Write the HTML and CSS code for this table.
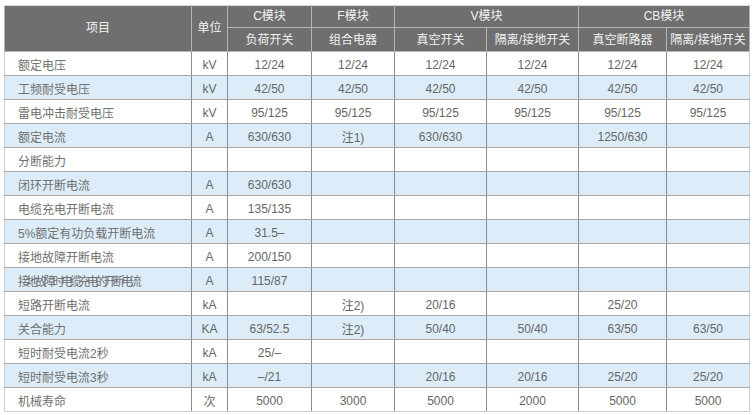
FILE: index.html
```html
<!DOCTYPE html>
<html lang="zh-CN">
<head>
<meta charset="utf-8">
<title>技术参数</title>
<link rel="stylesheet" href="styles.css">
</head>
<body>
<table class="spec">
  <colgroup>
    <col class="c-item">
    <col class="c-unit">
    <col class="c-c">
    <col class="c-f">
    <col class="c-v1">
    <col class="c-v2">
    <col class="c-cb1">
    <col class="c-cb2">
  </colgroup>
  <thead>
    <tr class="h1">
      <th rowspan="2">项目</th>
      <th rowspan="2">单位</th>
      <th>C模块</th>
      <th>F模块</th>
      <th colspan="2">V模块</th>
      <th colspan="2">CB模块</th>
    </tr>
    <tr class="h2">
      <th>负荷开关</th>
      <th>组合电器</th>
      <th>真空开关</th>
      <th>隔离/接地开关</th>
      <th>真空断路器</th>
      <th>隔离/接地开关</th>
    </tr>
  </thead>
  <tbody>
    <tr><td class="name">额定电压</td><td>kV</td><td>12/24</td><td>12/24</td><td>12/24</td><td>12/24</td><td>12/24</td><td>12/24</td></tr>
    <tr class="alt"><td class="name">工频耐受电压</td><td>kV</td><td>42/50</td><td>42/50</td><td>42/50</td><td>42/50</td><td>42/50</td><td>42/50</td></tr>
    <tr><td class="name">雷电冲击耐受电压</td><td>kV</td><td>95/125</td><td>95/125</td><td>95/125</td><td>95/125</td><td>95/125</td><td>95/125</td></tr>
    <tr class="alt"><td class="name">额定电流</td><td>A</td><td>630/630</td><td>注1)</td><td>630/630</td><td></td><td>1250/630</td><td></td></tr>
    <tr><td class="name">分断能力</td><td></td><td></td><td></td><td></td><td></td><td></td><td></td></tr>
    <tr class="alt"><td class="name">闭环开断电流</td><td>A</td><td>630/630</td><td></td><td></td><td></td><td></td><td></td></tr>
    <tr><td class="name">电缆充电开断电流</td><td>A</td><td>135/135</td><td></td><td></td><td></td><td></td><td></td></tr>
    <tr class="alt"><td class="name">5%额定有功负载开断电流</td><td>A</td><td>31.5–</td><td></td><td></td><td></td><td></td><td></td></tr>
    <tr><td class="name">接地故障开断电流</td><td>A</td><td>200/150</td><td></td><td></td><td></td><td></td><td></td></tr>
    <tr class="alt"><td class="name"><span class="squeeze">接地故障时电缆充电的开断电流</span></td><td>A</td><td>115/87</td><td></td><td></td><td></td><td></td><td></td></tr>
    <tr><td class="name">短路开断电流</td><td>kA</td><td></td><td>注2)</td><td>20/16</td><td></td><td>25/20</td><td></td></tr>
    <tr class="alt"><td class="name">关合能力</td><td>KA</td><td>63/52.5</td><td>注2)</td><td>50/40</td><td>50/40</td><td>63/50</td><td>63/50</td></tr>
    <tr><td class="name">短时耐受电流2秒</td><td>kA</td><td>25/–</td><td></td><td></td><td></td><td></td><td></td></tr>
    <tr class="alt"><td class="name">短时耐受电流3秒</td><td>kA</td><td>–/21</td><td></td><td>20/16</td><td>20/16</td><td>25/20</td><td>25/20</td></tr>
    <tr><td class="name">机械寿命</td><td>次</td><td>5000</td><td>3000</td><td>5000</td><td>2000</td><td>5000</td><td>5000</td></tr>
  </tbody>
</table>
</body>
</html>
```
FILE: styles.css
```css
html, body {
  margin: 0;
  padding: 0;
  background: #ffffff;
}
body {
  padding: 5px 0 0 4px;
  font-family: "Liberation Sans", "Noto Sans CJK SC", sans-serif;
  font-size: 12px;
  color: #707070;
}
.spec {
  border-collapse: collapse;
  table-layout: fixed;
  width: 745px;
  border: 1px solid #cfcfcf;
}
.c-item { width: 187px; }
.c-unit { width: 36px; }
.c-c { width: 84px; }
.c-f { width: 83px; }
.c-v1 { width: 92px; }
.c-v2 { width: 92px; }
.c-cb1 { width: 88px; }
.c-cb2 { width: 83px; }

.spec th {
  background: #6f6f6f;
  color: #f2f2f2;
  font-weight: normal;
  border: 1px solid #b4b4b4;
  padding: 0;
  text-align: center;
  line-height: 14px;
}
.spec thead tr:first-child th {
  border-top-color: #dcdcdc;
}
.h1 th { height: 20px; padding-bottom: 1px; }
.h2 th { height: 22px; padding-top: 1px; }

.spec td {
  height: 24px;
  padding: 2px 0 0 0;
  box-sizing: border-box;
  border-top: 1px solid #a8a8a8;
  border-bottom: 1px solid #a8a8a8;
  border-left: 1px solid #8c8c8c;
  border-right: 1px solid #8c8c8c;
  text-align: center;
  color: #666666;
  white-space: nowrap;
  overflow: hidden;
}
.spec td.name {
  text-align: left;
  padding-left: 13px;
  border-left-color: #cfcfcf;
  color: #707070;
}
.spec tr td:last-child {
  border-right-color: #cfcfcf;
}
.spec tbody tr:last-child td {
  border-bottom-color: #cfcfcf;
}
.alt td {
  background: #dcedf9;
}
.squeeze {
  letter-spacing: -3.4px;
}
```
